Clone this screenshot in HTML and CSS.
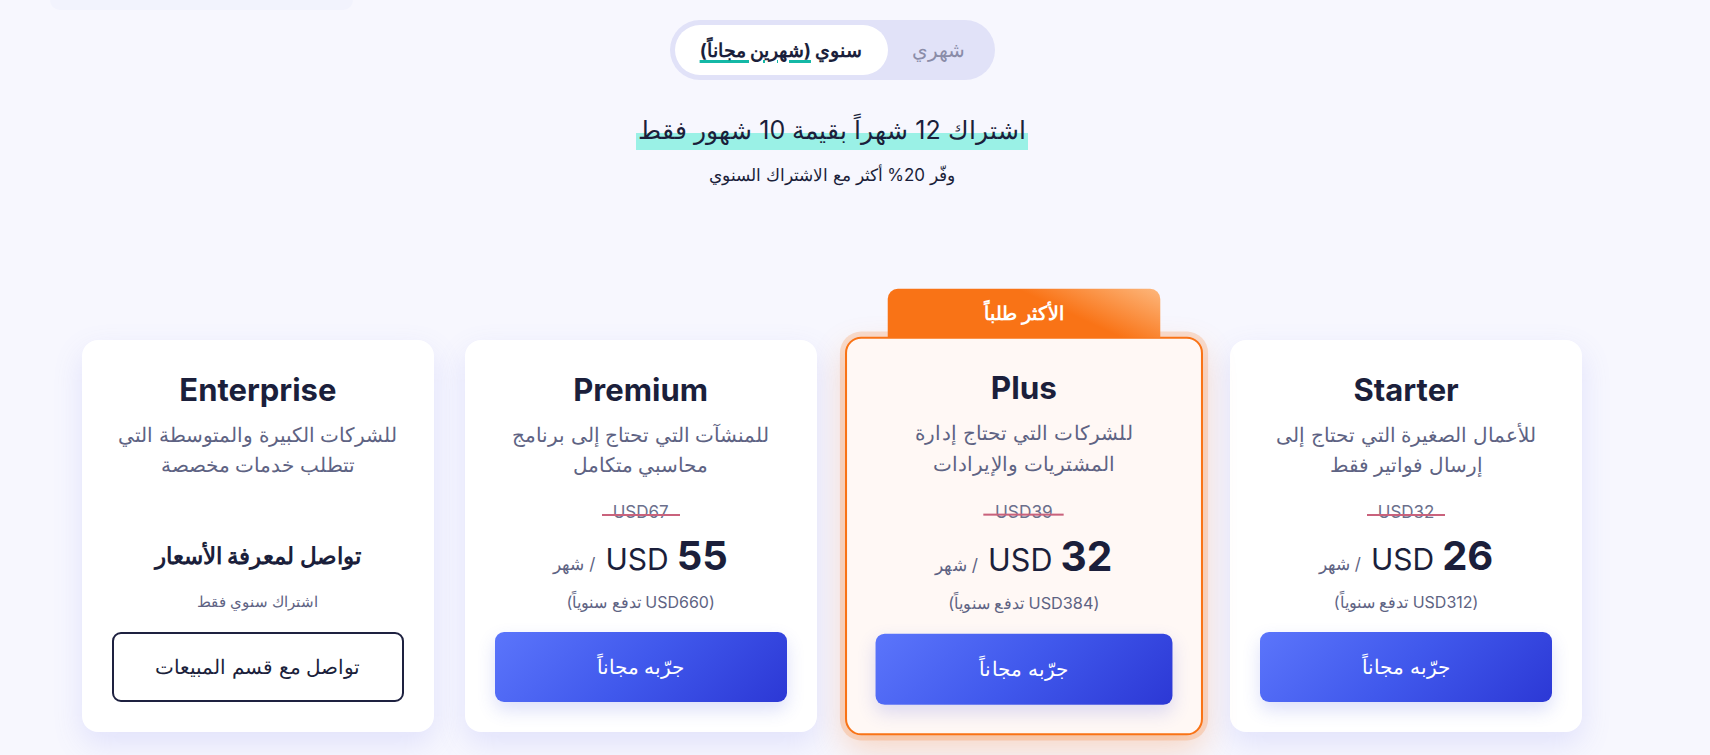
FILE: index.html
```html
<!DOCTYPE html>
<html lang="ar" dir="rtl">
<head>
<meta charset="utf-8">
<title>الأسعار</title>
<link rel="stylesheet" href="styles.css">
</head>
<body>
<div class="ghost"></div>
<main class="page">
  <div class="toggle">
    <button class="opt">شهري</button>
    <button class="opt active">سنوي <span class="free">(شهرين مجاناً)</span></button>
  </div>
  <h2 class="heading"><span class="hl">اشتراك 12 شهراً بقيمة 10 شهور فقط</span></h2>
  <p class="sub">وفّر 20% أكثر مع الاشتراك السنوي</p>

  <section class="cards">
    <article class="card">
      <h3 class="title">Starter</h3>
      <p class="desc">للأعمال الصغيرة التي تحتاج إلى<br>إرسال فواتير فقط</p>
      <div class="old"><span class="strike">USD32</span></div>
      <div class="price"><span class="amt">26</span><span class="cur">USD</span><span class="per">/ شهر</span></div>
      <div class="annual">(USD312 تدفع سنوياً)</div>
      <a class="btn primary">جرّبه مجاناً</a>
    </article>

    <article class="card featured">
      <div class="badge">الأكثر طلباً</div>
      <h3 class="title">Plus</h3>
      <p class="desc">للشركات التي تحتاج إدارة<br>المشتريات والإيرادات</p>
      <div class="old"><span class="strike">USD39</span></div>
      <div class="price"><span class="amt">32</span><span class="cur">USD</span><span class="per">/ شهر</span></div>
      <div class="annual">(USD384 تدفع سنوياً)</div>
      <a class="btn primary">جرّبه مجاناً</a>
    </article>

    <article class="card">
      <h3 class="title">Premium</h3>
      <p class="desc">للمنشآت التي تحتاج إلى برنامج<br>محاسبي متكامل</p>
      <div class="old"><span class="strike">USD67</span></div>
      <div class="price"><span class="amt">55</span><span class="cur">USD</span><span class="per">/ شهر</span></div>
      <div class="annual">(USD660 تدفع سنوياً)</div>
      <a class="btn primary">جرّبه مجاناً</a>
    </article>

    <article class="card">
      <h3 class="title">Enterprise</h3>
      <p class="desc">للشركات الكبيرة والمتوسطة التي<br>تتطلب خدمات مخصصة</p>
      <div class="old"></div>
      <div class="contact">تواصل لمعرفة الأسعار</div>
      <div class="annual small">اشتراك سنوي فقط</div>
      <a class="btn outline">تواصل مع قسم المبيعات</a>
    </article>
  </section>
</main>
</body>
</html>
```

FILE: styles.css
```css
* { box-sizing: border-box; }

html, body {
  margin: 0;
  padding: 0;
}

body {
  background: #f7f7fe;
  font-family: Inter, sans-serif;
  color: #1b1f3b;
  position: relative;
  overflow: hidden;
  height: 755px;
}

.ghost {
  position: absolute;
  top: 0;
  left: 50px;
  width: 303px;
  height: 10px;
  background: #f2f3fd;
  border-radius: 0 0 12px 12px;
}

.page {
  width: 1500px;
  margin: 0 128px 0 auto;
  padding-top: 20px;
  display: flex;
  flex-direction: column;
  align-items: center;
}

.toggle {
  display: flex;
  width: 325px;
  height: 60px;
  padding: 5px;
  background: #e1e2f8;
  border-radius: 30px;
}

.opt {
  border: 0;
  background: transparent;
  font-family: inherit;
  font-size: 19.5px;
  color: #8a8ca8;
  border-radius: 25px;
  display: block;
  text-align: center;
  line-height: 50px;
  flex: 1;
  padding: 0;
}

.opt.active {
  flex: 0 0 213px;
  background: #ffffff;
  color: #1b1f3b;
  font-weight: 700;
  font-size: 18.5px;
}

.free {
  text-decoration: underline;
  text-decoration-color: #14b8a6;
  text-decoration-thickness: 3px;
  text-underline-offset: 3px;
}

.heading {
  margin: 30px 0 0;
  font-size: 25px;
  font-weight: 400;
  line-height: 40px;
}

.hl {
  background: linear-gradient(to bottom, transparent 18px, #9af1e6 18px, #9af1e6 100%);
  padding: 0 2px 5px;
}

.sub {
  margin: 12px 0 0;
  font-size: 17px;
  line-height: 26px;
}

.cards {
  width: 100%;
  margin-top: 152px;
  display: grid;
  grid-template-columns: repeat(4, 1fr);
  gap: 31px;
}

.card {
  position: relative;
  background: #ffffff;
  border-radius: 16px;
  padding: 30px 30px 30px;
  display: flex;
  flex-direction: column;
  align-items: center;
  text-align: center;
  box-shadow: 0 12px 30px rgba(110, 120, 235, 0.16);
}

.card.featured {
  background: #fff8f5;
  border: 2px solid #f97316;
  padding: 28px 28px 28px;
  transform: scale(1.017);
  box-shadow: 0 0 0 5px rgba(249, 115, 22, 0.2), 0 14px 32px rgba(249, 115, 22, 0.25);
}

.badge {
  position: absolute;
  top: -49px;
  left: 50%;
  width: 268px;
  height: 48px;
  margin-left: -134px;
  border-radius: 10px 10px 0 0;
  background: linear-gradient(205deg, #fdb77c 0%, #f97316 38%, #f97316 100%);
  color: #ffffff;
  font-weight: 700;
  font-size: 19px;
  display: flex;
  align-items: center;
  justify-content: center;
}

.title {
  margin: 0;
  font-size: 31px;
  line-height: 40px;
  font-weight: 700;
  color: #1b1f3b;
}

.desc {
  margin: 10px 0 0;
  font-size: 20px;
  line-height: 30px;
  color: #5e6383;
}

.old {
  margin-top: 20px;
  height: 24px;
  font-size: 17px;
  line-height: 24px;
  color: #6b6f8c;
}

.strike {
  position: relative;
  padding: 0 11px;
}

.strike::after {
  content: "";
  position: absolute;
  left: 0;
  right: 0;
  top: 12px;
  height: 2px;
  background: #c9627c;
}

.price {
  margin-top: 8px;
  height: 48px;
  display: flex;
  align-items: baseline;
  justify-content: center;
  gap: 8px;
  line-height: 48px;
}

.amt {
  font-size: 40px;
  font-weight: 700;
  color: #1b1f3b;
}

.cur {
  font-size: 30px;
  font-weight: 400;
  color: #1b1f3b;
}

.per {
  font-size: 17px;
  color: #5e6383;
  margin-inline-start: 2px;
}

.contact {
  margin-top: 8px;
  height: 48px;
  line-height: 48px;
  font-size: 23px;
  font-weight: 700;
  color: #1b1f3b;
}

.annual {
  margin-top: 10px;
  font-size: 16px;
  line-height: 24px;
  color: #5e6383;
}

.annual.small {
  font-size: 14.5px;
}

.btn {
  margin-top: 18px;
  width: 100%;
  height: 70px;
  border-radius: 9px;
  display: flex;
  align-items: center;
  justify-content: center;
  font-size: 20px;
  text-decoration: none;
}

.btn.primary {
  color: #ffffff;
  background: linear-gradient(135deg, #5b75fb 0%, #4058ec 50%, #2c38d5 100%);
  box-shadow: 0 8px 18px rgba(60, 80, 220, 0.18);
}

.btn.outline {
  color: #1b1f3b;
  background: #ffffff;
  border: 2px solid #1e2140;
}
```
